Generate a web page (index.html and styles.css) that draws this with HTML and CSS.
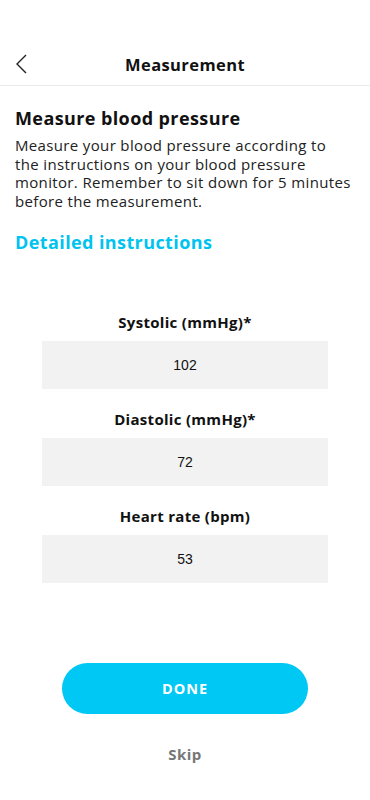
FILE: index.html
```html
<!DOCTYPE html>
<html>
<head>
<meta charset="utf-8">
<link rel="stylesheet" href="styles.css">
</head>
<body>
<div class="screen">
  <header class="topbar">
    <svg class="back" width="14" height="22" viewBox="0 0 14 22"><path d="M12 2 L3 11 L12 20" fill="none" stroke="#222" stroke-width="1.4"/></svg>
    <h1 class="title">Measurement</h1>
  </header>
  <main class="content">
    <h2 class="heading">Measure blood pressure</h2>
    <p class="desc">Measure your blood pressure according to<br>the instructions on your blood pressure<br>monitor. Remember to sit down for 5 minutes<br>before the measurement.</p>
    <a class="link">Detailed instructions</a>
    <div class="fields">
      <div class="field">
        <div class="label">Systolic (mmHg)*</div>
        <div class="input">102</div>
      </div>
      <div class="field">
        <div class="label">Diastolic (mmHg)*</div>
        <div class="input">72</div>
      </div>
      <div class="field">
        <div class="label">Heart rate (bpm)</div>
        <div class="input">53</div>
      </div>
    </div>
    <div class="actions">
      <button class="done">DONE</button>
      <div class="skip">Skip</div>
    </div>
  </main>
</div>
</body>
</html>
```
FILE: styles.css
```css
html, body { margin: 0; padding: 0; background: #fff; }
body { font-family: "Open Sans", "DejaVu Sans", sans-serif; color: #111; }
.screen { width: 370px; height: 800px; display: flex; flex-direction: column; }
.topbar {
  height: 86px; box-sizing: border-box; border-bottom: 1px solid #ececec;
  display: flex; align-items: center; justify-content: center; position: relative;
  padding-top: 44px;
}
.back { position: absolute; left: 14px; top: 53px; }
.title { margin: 0; font-size: 16.5px; font-weight: 700; color: #111; letter-spacing: 0.4px; line-height: 20px; }
.content { padding: 0 15px; display: flex; flex-direction: column; }
.heading { margin: 20px 0 0; font-size: 18px; font-weight: 700; line-height: 24px; letter-spacing: 0.4px; }
.desc { margin: 6px 0 0; font-size: 15px; line-height: 18.5px; color: #222; letter-spacing: 0.35px; }
.link { margin-top: 20px; font-size: 18px; font-weight: 700; color: #00c3ef; line-height: 24px; letter-spacing: 0.4px; }
.fields { margin-top: 59px; display: flex; flex-direction: column; gap: 21px; align-items: center; }
.field { width: 286px; display: flex; flex-direction: column; align-items: center; gap: 10px; }
.label { font-size: 15px; font-weight: 700; line-height: 18px; letter-spacing: 0.3px; }
.input {
  width: 286px; height: 48px; background: #f2f2f2; display: flex; align-items: center; justify-content: center;
  font-family: "Liberation Sans", Arial, sans-serif; font-size: 14px; color: #111;
}
.actions { margin-top: 80px; display: flex; flex-direction: column; align-items: center; }
.done {
  width: 246px; height: 51px; border: none; border-radius: 26px; background: #00c8f4; color: #fff;
  font-family: "Open Sans", sans-serif; font-weight: 700; font-size: 14.5px; letter-spacing: 1px;
}
.skip { margin-top: 30px; font-size: 15px; font-weight: 700; color: #777; letter-spacing: 0.5px; }
```
